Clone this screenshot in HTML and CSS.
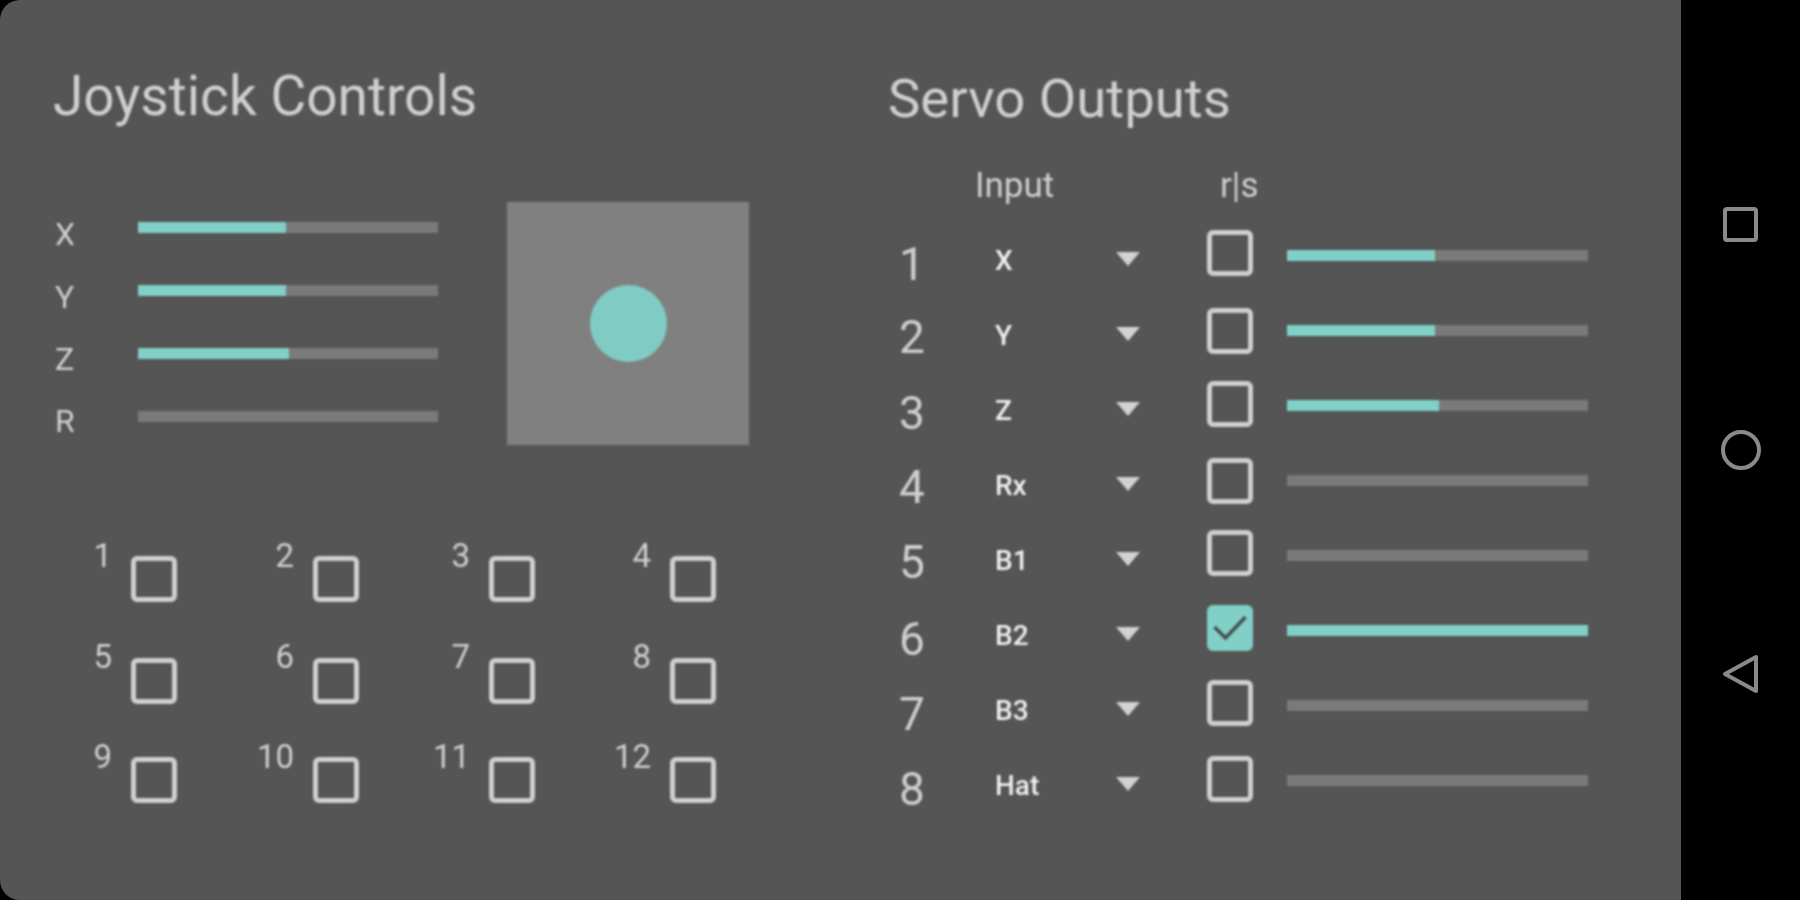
FILE: index.html
```html
<!DOCTYPE html>
<html lang="en">
<head>
    <meta charset="UTF-8">
    <title>Joystick Controls</title>
    <link rel="stylesheet" href="styles.css">
</head>
<body>
    <div class="panel">
        <div class="joystick">
            <h2>Joystick Controls</h2>
            <div class="sticks">
                <div class="axes">
                    <div class="axis"><span class="axis-name">X</span><div class="bar"><div class="fill" style="width: 49.3%"></div></div></div>
                    <div class="axis"><span class="axis-name">Y</span><div class="bar"><div class="fill" style="width: 49.3%"></div></div></div>
                    <div class="axis"><span class="axis-name">Z</span><div class="bar"><div class="fill" style="width: 50.3%"></div></div></div>
                    <div class="axis"><span class="axis-name">R</span><div class="bar"></div></div>
                </div>
                <div class="pad"><div class="knob"></div></div>
            </div>
            <div class="buttons">
                <div class="button-cell"><span>1</span><div class="check"></div></div>
                <div class="button-cell"><span>2</span><div class="check"></div></div>
                <div class="button-cell"><span>3</span><div class="check"></div></div>
                <div class="button-cell"><span>4</span><div class="check"></div></div>
                <div class="button-cell"><span>5</span><div class="check"></div></div>
                <div class="button-cell"><span>6</span><div class="check"></div></div>
                <div class="button-cell"><span>7</span><div class="check"></div></div>
                <div class="button-cell"><span>8</span><div class="check"></div></div>
                <div class="button-cell"><span>9</span><div class="check"></div></div>
                <div class="button-cell"><span>10</span><div class="check"></div></div>
                <div class="button-cell"><span>11</span><div class="check"></div></div>
                <div class="button-cell"><span>12</span><div class="check"></div></div>
            </div>
        </div>
        <div class="servos">
            <h2>Servo Outputs</h2>
            <div class="servo-head">
                <span class="head-input">Input</span>
                <span class="head-rs">r|s</span>
            </div>
            <div class="servo-list">
                <div class="servo-row"><span class="servo-num">1</span><span class="servo-input">X</span><div class="arrow"></div><div class="check"></div><div class="bar"><div class="fill" style="width: 49.3%"></div></div></div>
                <div class="servo-row"><span class="servo-num">2</span><span class="servo-input">Y</span><div class="arrow"></div><div class="check"></div><div class="bar"><div class="fill" style="width: 49.3%"></div></div></div>
                <div class="servo-row"><span class="servo-num">3</span><span class="servo-input">Z</span><div class="arrow"></div><div class="check"></div><div class="bar"><div class="fill" style="width: 50.5%"></div></div></div>
                <div class="servo-row"><span class="servo-num">4</span><span class="servo-input">Rx</span><div class="arrow"></div><div class="check"></div><div class="bar"></div></div>
                <div class="servo-row"><span class="servo-num">5</span><span class="servo-input">B1</span><div class="arrow"></div><div class="check"></div><div class="bar"></div></div>
                <div class="servo-row">
                    <span class="servo-num">6</span><span class="servo-input">B2</span><div class="arrow"></div>
                    <div class="check checked">
                        <svg width="46" height="46" viewBox="0 0 46 46"><path d="M7.5 22 18.5 33 38.5 12" fill="none" stroke="#454f4e" stroke-width="3.5"/></svg>
                    </div>
                    <div class="bar"><div class="fill" style="width: 100%"></div></div>
                </div>
                <div class="servo-row"><span class="servo-num">7</span><span class="servo-input">B3</span><div class="arrow"></div><div class="check"></div><div class="bar"></div></div>
                <div class="servo-row"><span class="servo-num">8</span><span class="servo-input">Hat</span><div class="arrow"></div><div class="check"></div><div class="bar"></div></div>
            </div>
        </div>
    </div>
    <div class="nav">
        <svg width="44" height="44" viewBox="0 0 44 44"><rect x="6" y="6" width="31" height="31" rx="2" fill="none" stroke="#8a8a8a" stroke-width="4"/></svg>
        <svg width="44" height="44" viewBox="0 0 44 44"><circle cx="22" cy="22" r="18" fill="none" stroke="#8a8a8a" stroke-width="4"/></svg>
        <svg width="44" height="44" viewBox="0 0 44 44"><path d="M37 4V38L6 21Z" fill="none" stroke="#8a8a8a" stroke-width="4" stroke-linejoin="round"/></svg>
    </div>
</body>
</html>
```

FILE: styles.css
```css
* {
    margin: 0;
    padding: 0;
    box-sizing: border-box;
}
html, body {
    height: 100%;
}
body {
    display: flex;
    overflow: hidden;
    background: #000;
    font-family: Roboto, 'Noto Sans', sans-serif;
    color: #cfcfcf;
}
h2 {
    font-size: 55px;
    line-height: 60px;
    font-weight: 400;
    white-space: nowrap;
}
.panel {
    display: flex;
    width: 1681px;
    height: 900px;
    background: #555;
    border-radius: 20px 0 0 20px;
}
/* the capture is a soft upscale, so the content is softened too */
.joystick,
.servos {
    filter: blur(0.8px);
}
.joystick {
    width: 888px;
    padding: 66px 0 0 53px;
}
.joystick h2 {
    margin-bottom: 76px;
}
.sticks {
    display: flex;
}
.axes {
    width: 454px;
    padding-top: 18px;
}
.axis {
    display: flex;
    height: 63px;
}
.axis-name {
    width: 85px;
    padding-left: 2px;
    margin-top: -2px;
    font-size: 32px;
    line-height: 32px;
}
.axis:nth-child(3) .axis-name { margin-top: -3px; }
.axis:nth-child(4) .axis-name { margin-top: -4px; }
.bar {
    width: 300px;
    height: 11px;
    margin-top: 2px;
    background: #7a7a7a;
}
.fill {
    height: 100%;
    background: #80d0c7;
}
.pad {
    display: flex;
    align-items: center;
    justify-content: center;
    width: 242px;
    height: 243px;
    background: #808080;
}
.knob {
    width: 77px;
    height: 77px;
    border-radius: 50%;
    background: #80cbc4;
}
.check {
    flex: none;
    width: 46px;
    height: 46px;
    border: 5px solid #cfcfcf;
    border-radius: 6px;
}
.check.checked {
    border: none;
    background: #80d0c7;
}
.check svg {
    display: block;
}
.buttons {
    display: grid;
    grid-template-columns: 124px 182px 176px 181px;
    grid-template-rows: 102px 99px 99px;
    margin-top: 68px;
    font-size: 33px;
    line-height: 33px;
}
.button-cell {
    display: flex;
    justify-content: flex-end;
    gap: 19px;
}
.button-cell span {
    margin-top: -1px;
}
.button-cell:nth-child(n+5):nth-child(-n+8) span {
    margin-top: -2px;
}
.button-cell .check {
    margin-top: 16px;
}
.servos {
    flex: 1;
    padding: 68px 0 0 0;
}
.servos h2 {
    font-size: 54.5px;
}
.servo-head {
    display: flex;
    height: 57px;
    margin-top: 40px;
    padding-left: 87px;
    font-size: 35px;
    line-height: 35px;
}
.head-input {
    width: 245px;
}
.servo-row {
    display: grid;
    grid-template-columns: 108px 120px 91px 80px 301px;
    align-items: start;
    height: 75px;
}
.servo-num {
    padding-left: 11px;
    margin-top: 16px;
    font-size: 46px;
    line-height: 46px;
}
.servo-row:nth-child(2) .servo-num,
.servo-row:nth-child(4) .servo-num,
.servo-row:nth-child(5) .servo-num { margin-top: 14px; }
.servo-row:nth-child(3) .servo-num { margin-top: 15px; }
.servo-input {
    margin-top: 22px;
    margin-left: -1px;
    font-size: 28px;
    line-height: 28px;
    font-weight: 500;
    color: #f0f0f0;
}
.arrow {
    width: 0;
    margin-top: 27px;
    border-left: 12px solid transparent;
    border-right: 12px solid transparent;
    border-top: 14px solid #d2d2d2;
}
.servo-row .check {
    margin-top: 5px;
}
.servo-row .bar {
    width: 301px;
    margin-top: 25px;
}
/* rows in the capture don't sit on an even pitch */
.servo-row:nth-child(2) .check { margin-top: 8px; }
.servo-row:nth-child(3) .check { margin-top: 6px; }
.servo-row:nth-child(4) .check { margin-top: 8px; }
.servo-row:nth-child(8) .check { margin-top: 6px; }
.nav {
    display: flex;
    flex-direction: column;
    align-items: center;
    justify-content: center;
    gap: 181px;
    width: 119px;
    filter: blur(0.5px);
}
```
